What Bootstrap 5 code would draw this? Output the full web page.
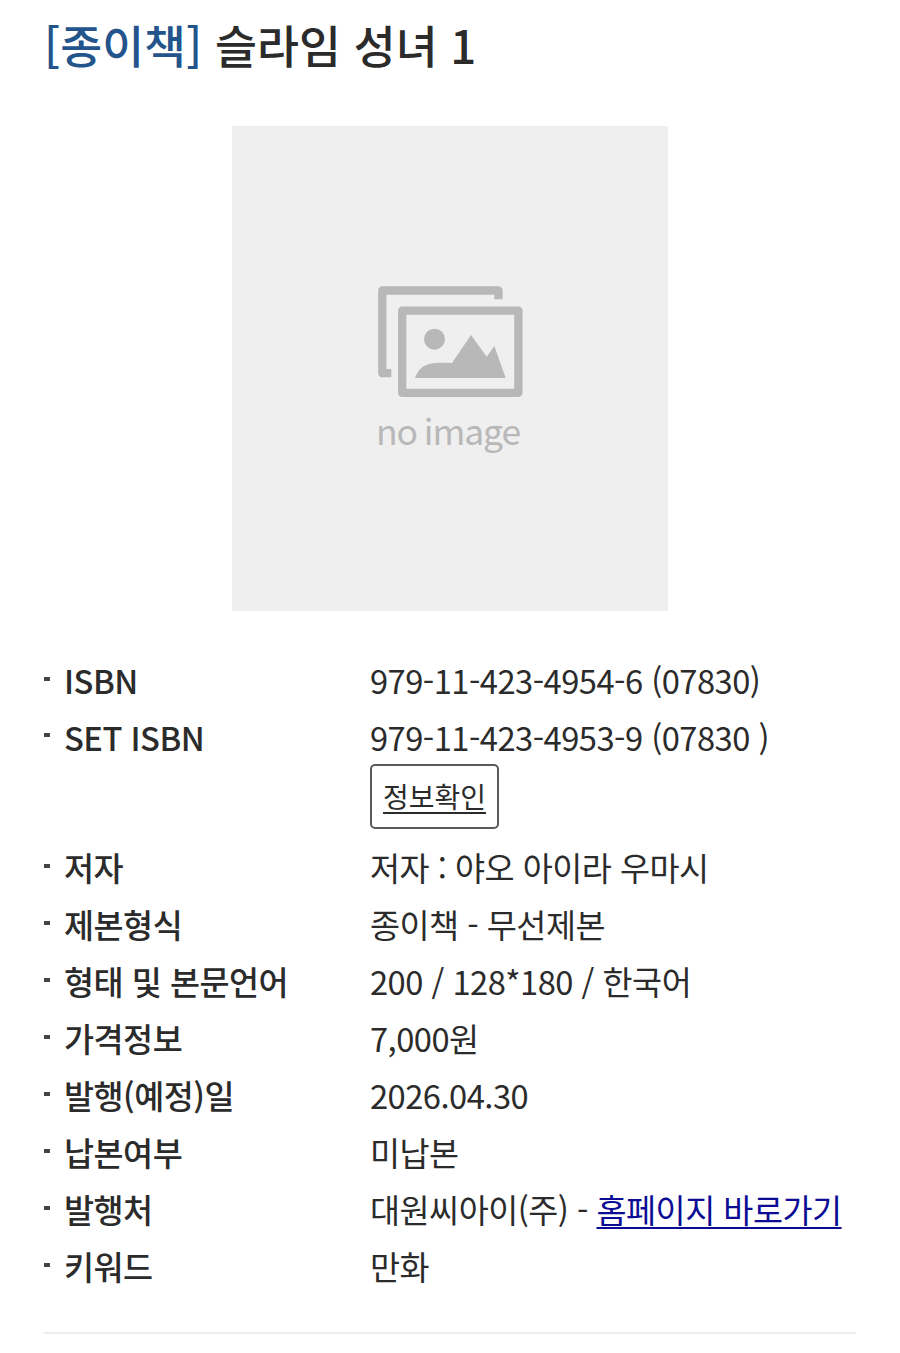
<!DOCTYPE html>
<html lang="ko">
<head>
  <meta charset="UTF-8"/>
  <meta name="viewport" content="width=device-width, initial-scale=1.0"/>
  <title>슬라임 성녀 1</title>
  <link href="https://cdn.jsdelivr.net/npm/bootstrap@5.3.0/dist/css/bootstrap.min.css" rel="stylesheet"/>
  <style>
    body { background: #fff; color: #2b2b2b; font-family: "Noto Sans CJK KR", sans-serif; }
    .page { padding: 11px 44px 0; }
    .book-title { font-size: 45.6px; font-weight: 500; line-height: 66px; height: 66px; }
    .book-title span { color: #23558c; }
    .cover { width: 436px; height: 485px; margin-top: 49px; background: #efefef; color: #b8b8b8; }
    .cover svg { width: 146px; height: 112px; margin-top: 160px; }
    .cover-text { font-size: 35.5px; line-height: 44px; letter-spacing: -1.1px; word-spacing: -2px; margin: 10px 4px 0 0; }
    .info { margin-top: 40.6px; font-size: 32.7px; letter-spacing: -.52px; }
    .info-row { min-height: 56.9px; line-height: 56.9px; }
    .info dt { width: 326px; height: 56.9px; font-weight: 500; }
    .info dt::before { content: ""; width: 6px; height: 4px; margin: 0 14px 3px 0; background: #444; }
    .info-btn { width: 129px; height: 65px; margin: -1px 0 10px; border: 2px solid #5a5a5a; border-radius: 5px; font-size: 28px; letter-spacing: 0; line-height: 61px; color: #2b2b2b; }
    .home-link { color: #0b0b94; }
    .info a { text-underline-offset: 4px; text-decoration-thickness: 2px; }
    .end-line { height: 2px; margin-top: 37px; background: #ededed; }
  </style>
</head>
<body>
  <main class="page">
    <h1 class="book-title mb-0 text-nowrap"><span>[종이책]</span> 슬라임 성녀 1</h1>
    <div class="cover mx-auto d-flex flex-column align-items-center">
      <svg viewBox="0 0 146 112" fill="none" stroke="currentColor" stroke-width="8.3" stroke-linejoin="round">
        <path d="M121.5 13.3V4.5H5.3v82.7h9"/>
        <rect x="25.2" y="24.6" width="116.2" height="82.3"/>
        <circle cx="57.5" cy="53.2" r="10.5" fill="currentColor" stroke="none"/>
        <path d="M38 92C44 77 53 76 75 77L94 49l15.7 21.7 7.6-10.7L128.7 92z" fill="currentColor" stroke="none"/>
      </svg>
      <div class="cover-text">no image</div>
    </div>
    <dl class="info mb-0 text-nowrap">
      <div class="info-row d-flex"><dt class="d-flex align-items-center">ISBN</dt><dd class="mb-0">979-11-423-4954-6 (07830)</dd></div>
      <div class="info-row d-flex">
        <dt class="d-flex align-items-center">SET ISBN</dt>
        <dd class="mb-0">979-11-423-4953-9 (07830 )
          <a href="#" class="info-btn d-block text-center">정보확인</a>
        </dd>
      </div>
      <div class="info-row d-flex"><dt class="d-flex align-items-center">저자</dt><dd class="mb-0">저자 : 야오 아이라 우마시</dd></div>
      <div class="info-row d-flex"><dt class="d-flex align-items-center">제본형식</dt><dd class="mb-0">종이책 - 무선제본</dd></div>
      <div class="info-row d-flex"><dt class="d-flex align-items-center">형태 및 본문언어</dt><dd class="mb-0">200 / 128*180 / 한국어</dd></div>
      <div class="info-row d-flex"><dt class="d-flex align-items-center">가격정보</dt><dd class="mb-0">7,000원</dd></div>
      <div class="info-row d-flex"><dt class="d-flex align-items-center">발행(예정)일</dt><dd class="mb-0">2026.04.30</dd></div>
      <div class="info-row d-flex"><dt class="d-flex align-items-center">납본여부</dt><dd class="mb-0">미납본</dd></div>
      <div class="info-row d-flex"><dt class="d-flex align-items-center">발행처</dt><dd class="mb-0">대원씨아이(주) - <a href="#" class="home-link">홈페이지 바로가기</a></dd></div>
      <div class="info-row d-flex"><dt class="d-flex align-items-center">키워드</dt><dd class="mb-0">만화</dd></div>
    </dl>
    <div class="end-line"></div>
  </main>
  <script src="https://cdn.jsdelivr.net/npm/bootstrap@5.3.0/dist/js/bootstrap.bundle.min.js"></script>
</body>
</html>
